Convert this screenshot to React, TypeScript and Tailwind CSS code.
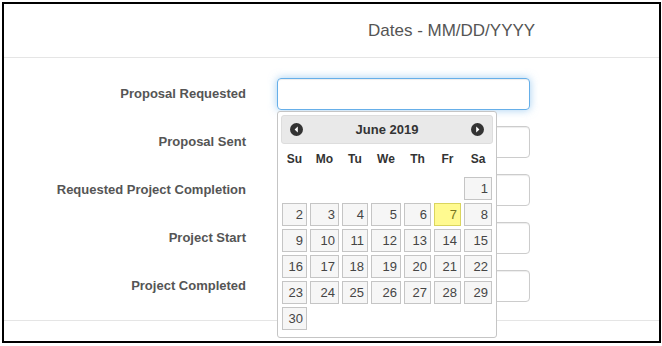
import React from 'react';

const labels = [
    'Proposal Requested',
    'Proposal Sent',
    'Requested Project Completion',
    'Project Start',
    'Project Completed',
];

const dayNames = ['Su', 'Mo', 'Tu', 'We', 'Th', 'Fr', 'Sa'];

// June 2019 starts on a Saturday
const cells: (number | null)[] = [null, null, null, null, null, null, ...Array.from({ length: 30 }, (_, i) => i + 1)];

const NavIcon: React.FC<{ dir: 'prev' | 'next' }> = ({ dir }) => (
    <svg width="13" height="13" viewBox="0 0 13 13">
        <circle cx="6.5" cy="6.5" r="6.5" fill="#333" />
        {dir === 'prev' ? (
            <path d="M7.8 3.6 L4.6 6.5 L7.8 9.4 Z" fill="#fff" />
        ) : (
            <path d="M5.2 3.6 L8.4 6.5 L5.2 9.4 Z" fill="#fff" />
        )}
    </svg>
);

const Datepicker: React.FC = () => (
    <div className="absolute left-[277px] top-[111px] w-[220px] h-[227px] bg-white border border-[#c5c5c5] rounded-[3px] p-[3px]">
        <div className="h-[29px] bg-[#e9e9e9] border border-[#dddddd] rounded-[3px] flex items-center justify-between px-[8px]">
            <NavIcon dir="prev" />
            <span className="text-[13px] font-bold text-[#333]">June 2019</span>
            <NavIcon dir="next" />
        </div>
        <div className="px-[1px] grid grid-cols-[25px_29px_26px_30px_27px_27px_28px] gap-x-[3px] gap-y-[3px]">
            {dayNames.map(d => (
                <div key={d} className="h-[30px] flex items-center justify-center text-[12px] font-bold text-[#333]">
                    {d}
                </div>
            ))}
            {cells.map((n, i) =>
                n === null ? (
                    <div key={i} />
                ) : (
                    <div
                        key={i}
                        className={
                            n === 7
                                ? 'h-[23px] border border-[#dad55e] bg-[#fffa90] text-[#777620] text-[13px] text-right pr-[3px] leading-[21px]'
                                : 'h-[23px] border border-[#c5c5c5] bg-[#f6f6f6] text-[#454545] text-[13px] text-right pr-[3px] leading-[21px]'
                        }
                    >
                        {n}
                    </div>
                )
            )}
        </div>
    </div>
);

export default function App() {
    return (
        <div className="relative w-[662px] h-[346px] overflow-hidden bg-white font-['Liberation_Sans',Arial,sans-serif]">
            <div className="ml-[2px] mt-[2px] w-[659px] h-[341px] border-2 border-black">
                <div className="h-[54px] border-b border-[#e5e5e5] flex items-center pl-[364px]">
                    <h4 className="text-[17px] text-[#555]">Dates - MM/DD/YYYY</h4>
                </div>
                <div className="pt-[20px] pb-[18px] flex flex-col gap-[16px] border-b border-[#e5e5e5]">
                    {labels.map((l, i) => (
                        <div key={l} className="flex items-center">
                            <label className="w-[242px] text-right text-[13px] font-bold text-[#555]">{l}</label>
                            <input
                                type="text"
                                className={
                                    i === 0
                                        ? 'ml-[31px] w-[253px] h-[32px] rounded-[4px] border border-[#66afe9] outline-none shadow-[inset_0_1px_1px_rgba(0,0,0,0.075),0_0_8px_rgba(102,175,233,0.6)]'
                                        : 'ml-[31px] w-[253px] h-[32px] rounded-[4px] border border-[#ccc] outline-none shadow-[inset_0_1px_1px_rgba(0,0,0,0.075)]'
                                }
                            />
                        </div>
                    ))}
                </div>
            </div>
            <h4 className="pl-[428px] pt-[1px] text-[16px] font-bold text-[#333]">Notes</h4>
            <Datepicker />
        </div>
    );
}
